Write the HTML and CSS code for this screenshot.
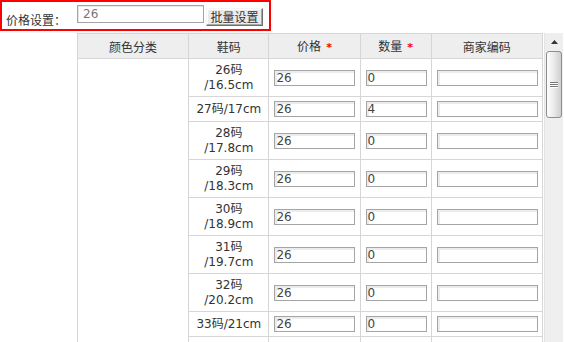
FILE: index.html
```html
<!DOCTYPE html>
<html lang="zh-CN">
<head>
<meta charset="utf-8">
<title>SKU</title>
<link rel="stylesheet" href="styles.css">
</head>
<body>
<div class="batch">
  <label class="batch-label">价格设置：</label>
  <input class="batch-input" type="text" value="26">
  <button class="batch-btn" type="button">批量设置</button>
</div>
<div class="sku">
  <div class="sku-scroll">
    <table class="sku-table">
      <thead>
        <tr>
          <th class="c-color">颜色分类</th>
          <th class="c-size">鞋码</th>
          <th class="c-price">价格<span class="req">*</span></th>
          <th class="c-qty">数量<span class="req">*</span></th>
          <th class="c-code">商家编码</th>
        </tr>
      </thead>
      <tbody>
        <tr class="dbl">
          <td class="c-color" rowspan="10"></td>
          <td class="c-size"><span class="part">26码</span><span class="part">/16.5cm</span></td>
          <td><input class="in-price" type="text" value="26"></td>
          <td><input class="in-qty" type="text" value="0"></td>
          <td><input class="in-code" type="text" value=""></td>
        </tr>
        <tr class="sgl">
          <td class="c-size"><span class="part">27码</span><span class="part">/17cm</span></td>
          <td><input class="in-price" type="text" value="26"></td>
          <td><input class="in-qty" type="text" value="4"></td>
          <td><input class="in-code" type="text" value=""></td>
        </tr>
        <tr class="dbl">
          <td class="c-size"><span class="part">28码</span><span class="part">/17.8cm</span></td>
          <td><input class="in-price" type="text" value="26"></td>
          <td><input class="in-qty" type="text" value="0"></td>
          <td><input class="in-code" type="text" value=""></td>
        </tr>
        <tr class="dbl">
          <td class="c-size"><span class="part">29码</span><span class="part">/18.3cm</span></td>
          <td><input class="in-price" type="text" value="26"></td>
          <td><input class="in-qty" type="text" value="0"></td>
          <td><input class="in-code" type="text" value=""></td>
        </tr>
        <tr class="dbl">
          <td class="c-size"><span class="part">30码</span><span class="part">/18.9cm</span></td>
          <td><input class="in-price" type="text" value="26"></td>
          <td><input class="in-qty" type="text" value="0"></td>
          <td><input class="in-code" type="text" value=""></td>
        </tr>
        <tr class="dbl">
          <td class="c-size"><span class="part">31码</span><span class="part">/19.7cm</span></td>
          <td><input class="in-price" type="text" value="26"></td>
          <td><input class="in-qty" type="text" value="0"></td>
          <td><input class="in-code" type="text" value=""></td>
        </tr>
        <tr class="dbl">
          <td class="c-size"><span class="part">32码</span><span class="part">/20.2cm</span></td>
          <td><input class="in-price" type="text" value="26"></td>
          <td><input class="in-qty" type="text" value="0"></td>
          <td><input class="in-code" type="text" value=""></td>
        </tr>
        <tr class="sgl">
          <td class="c-size"><span class="part">33码</span><span class="part">/21cm</span></td>
          <td><input class="in-price" type="text" value="26"></td>
          <td><input class="in-qty" type="text" value="0"></td>
          <td><input class="in-code" type="text" value=""></td>
        </tr>
        <tr class="sgl">
          <td class="c-size"></td>
          <td></td>
          <td></td>
          <td></td>
        </tr>
      </tbody>
    </table>
  </div>
  <div class="scrollbar">
    <div class="sb-up">
      <svg width="7" height="4" viewBox="0 0 7 4"><polygon points="0,4 7,4 3.5,0" fill="#333"/></svg>
    </div>
    <div class="sb-track">
      <div class="sb-thumb">
        <span class="grip"></span>
        <span class="grip"></span>
        <span class="grip"></span>
      </div>
    </div>
  </div>
</div>
</body>
</html>
```

FILE: styles.css
```css
html, body {
  margin: 0;
  padding: 0;
  background: #fff;
  overflow: hidden;
}
body {
  width: 564px;
  height: 342px;
  font-family: Tahoma, "DejaVu Sans", "Noto Sans CJK SC", sans-serif;
  font-size: 12px;
  color: #333;
}

/* batch price box */
.batch {
  box-sizing: border-box;
  width: 271px;
  height: 31px;
  border: 2px solid #ff0000;
  display: flex;
  align-items: flex-start;
  padding-left: 4px;
}
.batch-label {
  flex: none;
  width: 71px;
  margin-top: 10px;
  line-height: 16px;
  font-family: "Noto Sans CJK SC", sans-serif;
  color: #333;
}
.batch-input {
  flex: none;
  box-sizing: border-box;
  width: 127px;
  height: 18px;
  margin: 3px 0 0 0;
  padding: 0 0 0 5px;
  border: 1px solid #a5a5a5;
  box-shadow: inset 1px 1px 0 #e6e6e6;
  font: 12px Tahoma, "DejaVu Sans", sans-serif;
  color: #777;
  outline: none;
}
.batch-btn {
  flex: none;
  box-sizing: border-box;
  width: 57px;
  height: 18px;
  margin: 6px 0 0 2px;
  padding: 0;
  border: 1px solid;
  border-color: #f4f4f4 #6e6e6e #6e6e6e #f4f4f4;
  box-shadow: inset -1px -1px 0 #a8a8a8, inset 1px 1px 0 #fff;
  background: #ebebeb;
  font: 12px "Noto Sans CJK SC", sans-serif;
  line-height: 14px;
  color: #333;
}

/* sku table */
.sku {
  display: flex;
  margin: 2px 0 0 77px;
  height: 309px;
}
.sku-scroll {
  flex: none;
  width: 466px;
  overflow: hidden;
}
.sku-table {
  border-collapse: separate;
  border-spacing: 0;
  table-layout: fixed;
  width: 466px;
  border-left: 1px solid #d6d6d6;
  border-top: 1px solid #d6d6d6;
}
.sku-table th,
.sku-table td {
  box-sizing: border-box;
  border-right: 1px solid #d6d6d6;
  border-bottom: 1px solid #d6d6d6;
  padding: 0 5px;
  vertical-align: middle;
  line-height: 15px;
  text-align: left;
}
.sku-table th {
  height: 25px;
  background: #eeeeee;
  font-weight: normal;
  text-align: center;
  font-family: "Noto Sans CJK SC", sans-serif;
  color: #333;
}
.sku-table th.c-color { width: 111px; }
.sku-table th.c-size { width: 80px; }
.sku-table th.c-price { width: 91px; }
.sku-table th.c-qty { width: 71px; }
.sku-table th.c-code { width: 111px; }
.req {
  color: #ff0000;
  margin-left: 5px;
  font-family: Tahoma, "DejaVu Sans", sans-serif;
  font-weight: bold;
  font-size: 11px;
}
.sku-table td.c-size {
  text-align: center;
  padding: 0 2px;
  color: #333;
}
.part {
  display: inline-block;
  white-space: nowrap;
}
.sku-table tr.dbl td { height: 38px; }
.sku-table tr.sgl td { height: 25px; }

.sku-table input {
  display: block;
  box-sizing: border-box;
  height: 16px;
  margin: 0;
  padding: 0 0 0 1px;
  border: 1px solid #a5a5a5;
  box-shadow: inset 2px 2px 0 #ececec;
  font: 12px Tahoma, "DejaVu Sans", sans-serif;
  line-height: 14px;
  color: #444;
  outline: none;
  background: #fff;
}
.in-price { width: 81px; }
.in-qty { width: 61px; }
.in-code { width: 101px; }

/* fake scrollbar */
.scrollbar {
  flex: none;
  width: 18px;
  margin-left: 1px;
  display: flex;
  flex-direction: column;
  background: #efefef;
  border-left: 1px solid #e4e4e4;
}
.sb-up {
  height: 17px;
  display: flex;
  align-items: center;
  justify-content: center;
  background: #eeeeee;
}
.sb-track {
  flex: 1;
  padding: 1px 1px 0 1px;
}
.sb-thumb {
  box-sizing: border-box;
  height: 67px;
  border: 1px solid #8d8d8d;
  border-radius: 3px;
  background: linear-gradient(to right, #fdfdfd 0%, #ececec 45%, #cfcfcf 100%);
  display: flex;
  flex-direction: column;
  align-items: center;
  justify-content: center;
  gap: 1px;
}
.grip {
  width: 8px;
  height: 1px;
  background: #7a7a7a;
  box-shadow: 0 1px 0 #fff;
}
```
